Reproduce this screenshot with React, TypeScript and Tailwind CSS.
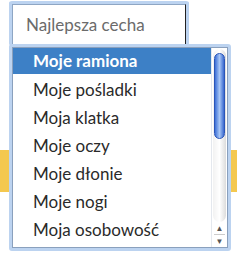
import React from 'react';

const options = [
  'Moje ramiona',
  'Moje pośladki',
  'Moja klatka',
  'Moje oczy',
  'Moje dłonie',
  'Moje nogi',
  'Moja osobowość',
];

const App: React.FC = () => {
  return (
    <div
      className="relative w-[237px] h-[254px] overflow-hidden bg-white"
      style={{ fontFamily: 'Lato, "Noto Sans", sans-serif' }}
    >
      {/* top row: focused select + next field */}
      <div className="flex items-start pt-[1px] pl-[9px]">
        <div className="rounded-[3px] border-[3px] border-[#bcd3f0] border-b-0">
          <div className="w-[174px] h-[42px] bg-white border border-[#8ea6c4] border-r-[#222] border-b-[#222] flex items-center pl-[13px] text-[17px] text-[#6b6b6b]">
            Najlepsza cecha
          </div>
        </div>
        <div className="ml-[50px] mt-[4px] w-[20px] h-[41px] border border-[#222] bg-white" />
      </div>

      {/* yellow band behind the dropdown */}
      <div className="mt-[104px] h-[42px] bg-[#f4c84f]" />

      {/* open dropdown list */}
      <div className="absolute left-[9px] top-[44px] w-[222px] h-[207px] rounded-[3px] border-[3px] border-[#bcd3f0] bg-white">
        <div className="flex h-full border border-[#8aa0bd]">
          <ul className="flex-1">
            {options.map((o, i) => (
              <li
                key={o}
                className={`flex items-center pl-[20px] text-[17px] ${
                  i === 0 ? 'h-[26px] bg-[#3d80c6] text-white font-bold' : 'h-[28px] text-[#2a2a2a]'
                } ${i === 1 ? 'mt-[2px]' : ''}`}
              >
                {o}
              </li>
            ))}
          </ul>
          <div className="w-[16px] flex flex-col bg-white border-l border-[#e4e8ee]">
            <div className="flex-1 mt-[1px] mx-[1px] rounded-full bg-gradient-to-r from-[#f2f2f2] via-[#ffffff] to-[#dcdcdc] relative">
              <div className="absolute left-[1px] right-[1px] top-[4px] h-[86px] rounded-full border border-[#2a55b8] bg-gradient-to-r from-[#3d6fd6] via-[#a8c6f5] to-[#3a68cf]" />
            </div>
            <div className="h-[12px] flex items-center justify-center text-[8px] text-[#555] leading-none">▲</div>
            <div className="h-[1px] mx-[2px] bg-[#ccc]" />
            <div className="h-[12px] flex items-center justify-center text-[8px] text-[#555] leading-none">▼</div>
          </div>
        </div>
      </div>
    </div>
  );
};

export default App;
